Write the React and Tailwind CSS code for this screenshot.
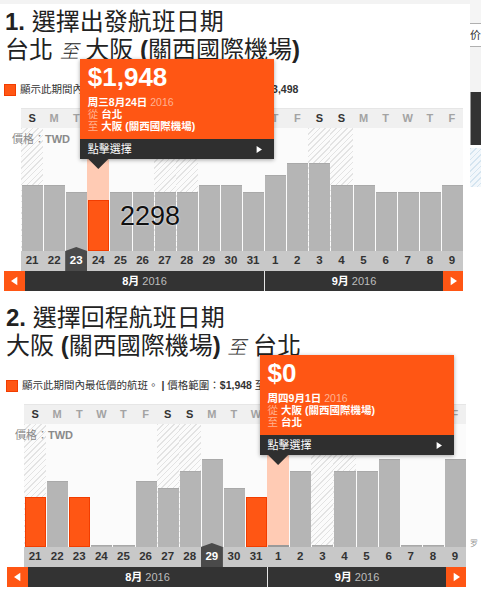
const days = ['S', 'M', 'T', 'W', 'T', 'F', 'S']
const dates = [21, 22, 23, 24, 25, 26, 27, 28, 29, 30, 31, 1, 2, 3, 4, 5, 6, 7, 8, 9]
const COL = 22.1

// bar heights in px, o = orange (cheapest)
const outbound = [66, 66, 59, 51, 59, 59, 59, 59, 66, 66, 59, 76, 88, 88, 66, 66, 59, 59, 59, 66].map((h) => ({ h }))
outbound[3].o = true

const inbound = [50, 66, 50, 2, 2, 66, 59, 76, 88, 59, 50, 2, 76, 2, 76, 76, 88, 2, 2, 88].map((h) => ({ h }))
inbound[0].o = true
inbound[2].o = true
inbound[10].o = true

const hatch =
  'bg-[repeating-linear-gradient(135deg,#e3e3e3_0px,#e3e3e3_1px,#fbfbfb_1px,#fbfbfb_4px)]'

function Tri({ dir = 'right', className = '' }) {
  return (
    <svg className={className} viewBox="0 0 10 12" fill="white">
      {dir === 'right' ? <polygon points="1,0 10,6 1,12" /> : <polygon points="9,0 0,6 9,12" />}
    </svg>
  )
}

function Tooltip({ sel, price, date, from, to }) {
  const left = sel * COL - 7.5
  return (
    <div className="absolute top-[-49px] z-20 w-[194px]" style={{ left }}>
      <div className="shadow-[0_1px_4px_rgba(0,0,0,0.35)]">
        <div className="bg-[#ff5614] px-[8px] pt-[4px] pb-[7px] text-white">
          <div className="text-[26px] leading-[28px] font-bold">{price}</div>
          <div className="mt-[5px] text-[10.5px] leading-[12px]">
            <div>
              <span className="font-bold">{date}</span> <span className="text-[#ffb290]">2016</span>
            </div>
            <div>
              <span className="text-[#ffb290]">從</span> <span className="font-bold">{from}</span>
            </div>
            <div>
              <span className="text-[#ffb290]">至</span> <span className="font-bold">{to}</span>
            </div>
          </div>
        </div>
        <div className="flex h-[20px] items-center justify-between bg-[#2f2f2f] pl-[8px] pr-[12px] text-[11px] text-white">
          <span>點擊選擇</span>
          <Tri className="h-[9px] w-[6px]" />
        </div>
      </div>
      <div className="ml-[8.5px] h-[10px] w-[20px] bg-[#2f2f2f] [clip-path:polygon(0_0,100%_0,50%_100%)]" />
    </div>
  )
}

function Chart({ offset, bars, sel, tab, tip }) {
  return (
    <div className={`relative w-[442px] ${offset}`}>
      {/* weekday header */}
      <div className="grid h-[20px] grid-cols-[repeat(20,minmax(0,1fr))] border-t border-[#e6e6e6] bg-[#f0f0f0]">
        {dates.map((d, i) => {
          const w = days[i % 7]
          const we = i % 7 === 0 || i % 7 === 6
          return (
            <div
              key={i}
              className={`flex items-center justify-center text-[11px] font-bold ${we ? 'text-[#333]' : 'text-[#a3a3a3]'}`}
            >
              {w}
            </div>
          )
        })}
      </div>

      {/* bars */}
      <div className="grid h-[123px] grid-cols-[repeat(20,minmax(0,1fr))] bg-[#fbfbfb]">
        {bars.map((b, i) => {
          const we = i % 7 === 0 || i % 7 === 6
          const isSel = i === sel
          let bg = 'bg-[#b5b5b5] border-t border-[#a9a9a9]'
          if (b.o) bg = 'bg-[#ff5614] border border-[#f23d00]'
          if (isSel && !b.o) bg = 'bg-[#9a9a9a]'
          return (
            <div
              key={i}
              className={`flex flex-col justify-end ${isSel ? 'bg-[#ffcbb4]' : we ? hatch : ''}`}
            >
              <div className={`ml-[1px] ${bg}`} style={{ height: b.h }} />
            </div>
          )
        })}
      </div>

      {/* dates */}
      <div className="grid h-[20px] grid-cols-[repeat(20,minmax(0,1fr))] bg-[#c8c8c8]">
        {dates.map((d, i) => (
          <div key={i} className="relative flex items-center justify-center text-[11.5px] font-bold text-[#333]">
            {i === tab && (
              <div className="absolute inset-x-0 top-[-4px] bottom-0 bg-[#4a4a4a] [clip-path:polygon(0_4px,50%_0,100%_4px,100%_100%,0_100%)]" />
            )}
            <span className={`relative ${i === tab ? 'text-white' : ''}`}>{d}</span>
          </div>
        ))}
      </div>

      {/* month bar */}
      <div className="ml-[-17px] flex h-[20px] w-[459px] text-[11px]">
        <div className="flex w-[21px] items-center justify-center bg-[#ff5614]">
          <Tri dir="left" className="h-[10px] w-[7px]" />
        </div>
        <div className="flex w-[239px] items-center justify-center gap-[3px] bg-[#333]">
          <span className="font-bold text-white">8月</span>
          <span className="text-[#bdbdbd]">2016</span>
        </div>
        <div className="w-px bg-[#e5e5e5]" />
        <div className="flex w-[178px] items-center justify-center gap-[3px] bg-[#333]">
          <span className="font-bold text-white">9月</span>
          <span className="text-[#bdbdbd]">2016</span>
        </div>
        <div className="flex w-[20px] items-center justify-center bg-[#ff5614]">
          <Tri className="h-[10px] w-[7px]" />
        </div>
      </div>

      {/* currency label */}
      <div className="absolute left-[-9px] top-[25px] z-10 text-[11px] leading-[12px] text-[#8a8a8a]">
        價格：<span className="font-bold">TWD</span>
      </div>

      <Tooltip sel={sel} {...tip} />
    </div>
  )
}

function Legend({ tail }) {
  return (
    <div className="flex h-[12px] items-center gap-[4px] text-[10.5px] text-[#333]">
      <span className="h-[12px] w-[12px] border border-[#f23d00] bg-[#ff5614]" />
      <span>
        顯示此期間內最低價的航班。 <span className="font-bold">|</span> 價格範圍：
        <span className="font-bold">$1,948</span> 至 <span className="font-bold">{tail}</span>
      </span>
    </div>
  )
}

export default function App() {
  return (
    <div className="flex h-[600px] w-[481px] overflow-hidden bg-white font-['Liberation_Sans','Noto_Sans_CJK_TC',sans-serif] text-[#222]">
      <div className="relative w-[470px] shrink-0">
        {/* section 1 */}
        <div className="relative h-[296px]">
          <div className="h-[4px] bg-[#f3f3f3]" />
          <div className="pl-[5px] pt-[4px] text-[24px] leading-[28px]">
            <div>
              <span className="font-bold">1.</span> 選擇出發航班日期
            </div>
            <div>
              台北 <span className="text-[19px] font-light italic">至</span> 大阪 <span className="font-bold">(</span>關西國際機場<span className="font-bold">)</span>
            </div>
          </div>
          <div className="mt-[18px] pl-[4px]">
            <Legend tail="$3,498" />
          </div>
          <div className="mt-[12px]">
            <Chart
              offset="ml-[21px]"
              bars={outbound}
              sel={3}
              tab={2}
              tip={{ price: '$1,948', date: '周三8月24日', from: '台北', to: '大阪 (關西國際機場)' }}
            />
          </div>
          <div className="absolute left-[120px] top-[203px] z-10 text-[27px] leading-[27px] text-[#111] [text-shadow:0_0_2px_white]">
            2298
          </div>
        </div>

        {/* section 2 */}
        <div className="relative h-[304px]">
          <div className="pl-[6px] pt-[8px] text-[24px] leading-[28px]">
            <div>
              <span className="font-bold">2.</span> 選擇回程航班日期
            </div>
            <div>
              大阪 <span className="font-bold">(</span>關西國際機場<span className="font-bold">)</span> <span className="text-[19px] font-light italic">至</span> 台北
            </div>
          </div>
          <div className="mt-[18px] pl-[6px]">
            <Legend tail="$3,498" />
          </div>
          <div className="mt-[12px]">
            <Chart
              offset="ml-[24px]"
              bars={inbound}
              sel={11}
              tab={8}
              tip={{ price: '$0', date: '周四9月1日', from: '大阪 (關西國際機場)', to: '台北' }}
            />
          </div>
        </div>
      </div>

      {/* cut-off sidebar */}
      <div className="w-[11px] shrink-0 overflow-hidden text-[11px]">
        <div className="h-[23px] bg-[#f5f5f5]" />
        <div className="h-[24px] whitespace-nowrap border-y border-[#b0b0b0] leading-[22px] text-[#333]">价格</div>
        <div className="h-[45px] bg-[#f3f3f3]" />
        <div className="h-[53px] border-l border-[#999] bg-[#333]" />
        <div className="mt-[3px] h-[39px] bg-[repeating-linear-gradient(135deg,#d5e5f0_0px,#d5e5f0_1px,#f2f7fb_1px,#f2f7fb_4px)]" />
        <div className="mt-[352px] text-[8px] leading-[9px] text-[#999]">罗</div>
      </div>
    </div>
  )
}
